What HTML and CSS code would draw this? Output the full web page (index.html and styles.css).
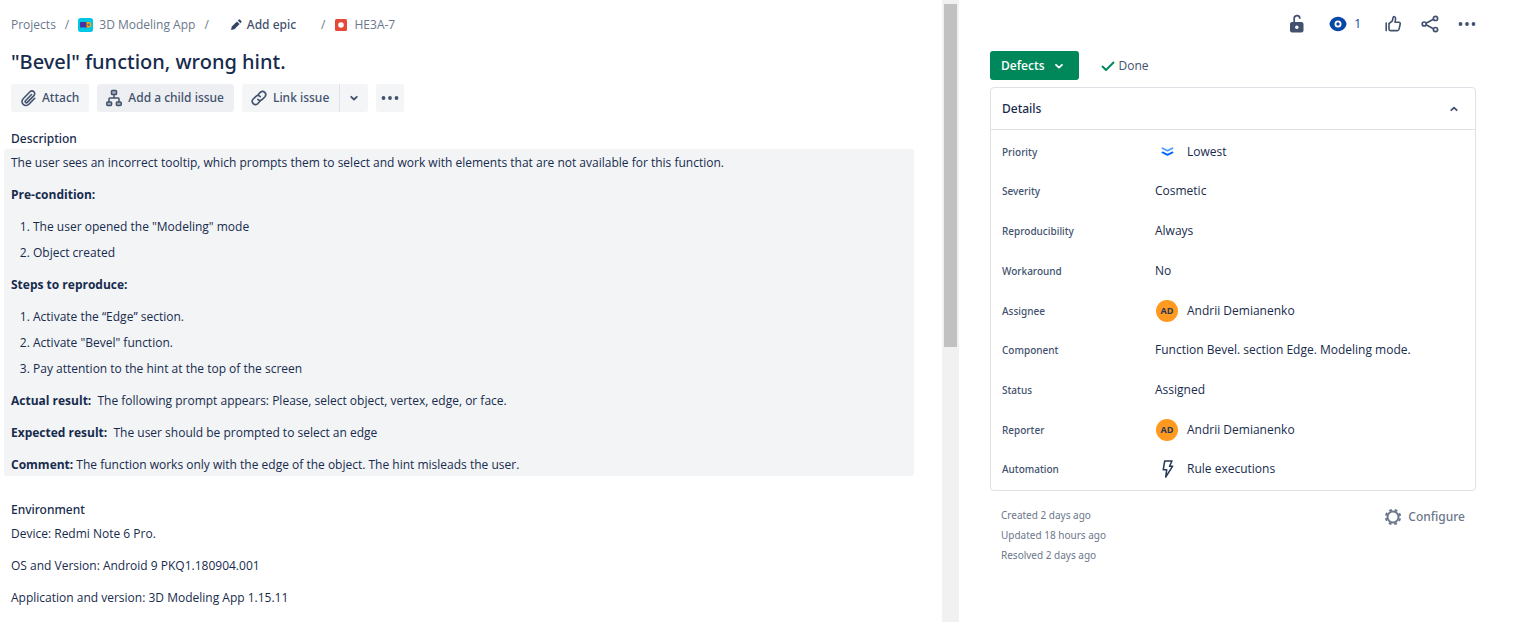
FILE: index.html
```html
<!DOCTYPE html>
<html lang="en">
<head>
<meta charset="utf-8">
<meta name="viewport" content="width=device-width, initial-scale=1">
<title>HE3A-7</title>
<link rel="stylesheet" href="styles.css">
</head>
<body>
<div class="layout">
  <main class="issue">
    <nav class="crumbs" aria-label="Breadcrumbs">
      <a href="#">Projects</a>
      <span class="sep">/</span>
      <a href="#" class="crumb-icon">
        <svg width="16" height="16" viewBox="0 0 16 16" aria-hidden="true"><rect y="1" width="15" height="14" rx="2.500" fill="#00c7e5"/><rect x="2" y="5" width="8" height="5.500" rx=".8" fill="#4a32a0"/><path d="M8.500 5h2a2.750 2.750 0 0 1 0 5.500h-2z" fill="#ffab00"/><circle cx="10.600" cy="7.700" r="1.200" fill="#5b6a91"/></svg>
        <span>3D Modeling App</span>
      </a>
      <span class="sep">/</span>
      <button type="button" class="epic">
        <svg width="12" height="12" viewBox="0 0 12 12" aria-hidden="true"><path d="M1 11l.8-3.400L7 2.400 9.600 5 4.400 10.200zM7.800 1.600l.9-.9a1 1 0 0 1 1.400 0l1.200 1.200a1 1 0 0 1 0 1.400l-.9.9z" fill="#344563"/></svg>
        <span>Add epic</span>
      </button>
      <span class="sep">/</span>
      <a href="#" class="crumb-icon key">
        <svg width="12" height="12" viewBox="0 0 12 12" aria-hidden="true"><rect width="12" height="12" rx="1.500" fill="#e5493a"/><circle cx="6" cy="6" r="2.800" fill="#fff"/></svg>
        <span>HE3A-7</span>
      </a>
    </nav>

    <h1 class="title">"Bevel" function, wrong hint.</h1>

    <div class="toolbar">
      <button type="button" class="btn">
        <svg width="18" height="18" viewBox="0 0 18 18" fill="none" stroke="#42526e" stroke-width="1.600" stroke-linecap="round" aria-hidden="true"><path d="M12.500 5.500l-6 6.200a1.200 1.200 0 0 0 1.800 1.700l6.600-6.800a2.700 2.700 0 0 0-.1-3.900 2.700 2.700 0 0 0-3.800.1L4.200 9.700a4 4 0 0 0 0 5.700 4 4 0 0 0 5.700-.1l5.800-6"/></svg>
        <span>Attach</span>
      </button>
      <button type="button" class="btn btn-hover">
        <svg width="18" height="18" viewBox="0 0 18 18" fill="none" stroke="#42526e" stroke-width="1.500" aria-hidden="true"><rect x="6.500" y="1.500" width="5" height="4" rx=".8" fill="#a5adba"/><path d="M9 5.500V9M4 13V9.800q0-.8.800-.8h8.400q.8 0 .8.800V13"/><rect x="1.800" y="13" width="4.800" height="3.400" rx=".8" fill="#a5adba"/><rect x="11.400" y="13" width="4.800" height="3.400" rx=".8" fill="#a5adba"/></svg>
        <span>Add a child issue</span>
      </button>
      <div class="split">
        <button type="button" class="btn split-main">
          <svg width="18" height="18" viewBox="0 0 18 18" fill="none" stroke="#42526e" stroke-width="1.600" stroke-linecap="round" aria-hidden="true"><path d="M8 5.700l2.500-2.500a3.200 3.200 0 0 1 4.500 4.500l-2.700 2.700a3.200 3.200 0 0 1-4.500 0"/><path d="M10 12.300l-2.500 2.500A3.200 3.200 0 0 1 3 10.300l2.700-2.700a3.200 3.200 0 0 1 4.500 0"/></svg>
          <span>Link issue</span>
        </button>
        <button type="button" class="btn icon-btn" aria-label="More link options">
          <svg width="12" height="12" viewBox="0 0 12 12" fill="none" stroke="#42526e" stroke-width="1.800" stroke-linecap="round" stroke-linejoin="round" aria-hidden="true"><path d="M3.200 4.800L6 7.500l2.800-2.700"/></svg>
        </button>
      </div>
      <button type="button" class="btn icon-btn" aria-label="More actions">
        <svg width="18" height="6" viewBox="0 0 18 6" fill="#42526e" aria-hidden="true"><circle cx="2.500" cy="3" r="1.900"/><circle cx="9" cy="3" r="1.900"/><circle cx="15.500" cy="3" r="1.900"/></svg>
      </button>
    </div>

    <section>
      <h2 class="heading">Description</h2>
      <div class="prose shaded">
        <p>The user sees an incorrect tooltip, which prompts them to select and work with elements that are not available for this function.</p>
        <p><strong>Pre-condition:</strong></p>
        <ol>
          <li>The user opened the "Modeling" mode</li>
          <li>Object created</li>
        </ol>
        <p><strong>Steps to reproduce:</strong></p>
        <ol>
          <li>Activate the “Edge” section.</li>
          <li>Activate "Bevel" function.</li>
          <li>Pay attention to the hint at the top of the screen</li>
        </ol>
        <p><strong>Actual result:</strong>&nbsp; The following prompt appears: Please, select object, vertex, edge, or face.</p>
        <p><strong>Expected result:</strong>&nbsp; The user should be prompted to select an edge</p>
        <p><strong>Comment:</strong> The function works only with the edge of the object. The hint misleads the user.</p>
      </div>
    </section>

    <section class="environment">
      <h2 class="heading">Environment</h2>
      <div class="prose">
        <p>Device: Redmi Note 6 Pro.</p>
        <p>OS and Version: Android 9 PKQ1.180904.001</p>
        <p>Application and version: 3D Modeling App 1.15.11</p>
      </div>
    </section>
  </main>

  <div class="scroll-track" aria-hidden="true"><div class="scroll-thumb"></div></div>

  <aside class="side">
    <div class="actions">
      <button type="button" class="plain" aria-label="Restrictions">
        <svg width="18" height="20" viewBox="0 0 18 20" aria-hidden="true"><rect x="2" y="8" width="13.500" height="10.500" rx="2" fill="#42526e"/><path d="M6.200 8V4.800a2.800 2.800 0 0 1 5.600-.6" fill="none" stroke="#42526e" stroke-width="1.700" stroke-linecap="round"/><circle cx="8.800" cy="13.200" r="1.700" fill="#fff"/></svg>
      </button>
      <button type="button" class="plain watch" aria-label="Watchers: 1">
        <svg width="18" height="16" viewBox="0 0 18 16" aria-hidden="true"><path d="M9 .8c4.800 0 8.500 4.400 8.500 7.200S13.800 15.200 9 15.200.5 10.800.5 8 4.200.8 9 .8z" fill="#0747a6"/><circle cx="9" cy="8" r="2.600" fill="none" stroke="#fff" stroke-width="1.800"/></svg>
        <span>1</span>
      </button>
      <button type="button" class="plain" aria-label="Vote">
        <svg width="18" height="18" viewBox="0 0 18 18" fill="none" stroke="#42526e" stroke-width="1.600" stroke-linejoin="round" stroke-linecap="round" aria-hidden="true"><path d="M2.200 8v7.600M5 8.500l3.200-2.300 1-4c.3-1 2.400-.8 2.400 1.200 0 1.600-.6 3-.6 3.900h4c1 0 1.400.8 1.200 1.700l-1.200 5.400c-.2.800-.8 1.200-1.600 1.200H6.200c-.8 0-1.200-.5-1.200-1.300z"/></svg>
      </button>
      <button type="button" class="plain" aria-label="Share">
        <svg width="18" height="18" viewBox="0 0 18 18" fill="none" stroke="#42526e" stroke-width="1.700" aria-hidden="true"><path d="M5 8.200l7.400-4M5 9.800l7.400 4"/><circle cx="3.200" cy="9" r="2"/><circle cx="14.500" cy="3.400" r="2.100"/><circle cx="14.500" cy="14.600" r="2.100"/></svg>
      </button>
      <button type="button" class="plain" aria-label="Actions">
        <svg width="18" height="6" viewBox="0 0 18 6" fill="#42526e" aria-hidden="true"><circle cx="2.500" cy="3" r="1.900"/><circle cx="9" cy="3" r="1.900"/><circle cx="15.500" cy="3" r="1.900"/></svg>
      </button>
    </div>

    <div class="status-row">
      <button type="button" class="status">
        <span>Defects</span>
        <svg width="12" height="12" viewBox="0 0 12 12" fill="none" stroke="#fff" stroke-width="1.800" stroke-linecap="round" stroke-linejoin="round" aria-hidden="true"><path d="M3 4.800l3 2.800 3-2.800"/></svg>
      </button>
      <span class="done">
        <svg width="14" height="12" viewBox="0 0 14 12" fill="none" stroke="#00875a" stroke-width="1.900" stroke-linecap="round" stroke-linejoin="round" aria-hidden="true"><path d="M1.500 6.500L5 10l7.500-7.500"/></svg>
        <span>Done</span>
      </span>
    </div>

    <section class="panel">
      <button type="button" class="panel-head" aria-expanded="true">
        <span>Details</span>
        <svg width="12" height="12" viewBox="0 0 12 12" fill="none" stroke="#42526e" stroke-width="1.800" stroke-linecap="round" stroke-linejoin="round" aria-hidden="true"><path d="M3.300 7.200L6 4.700l2.700 2.500"/></svg>
      </button>
      <dl class="fields">
        <div class="field with-icon"><dt>Priority</dt><dd>
          <svg class="field-icon" width="24" height="14" viewBox="0 0 24 14" fill="none" stroke-width="1.800" stroke-linecap="round" stroke-linejoin="round" aria-hidden="true"><path d="M7.500 3.200l5 2.500 5-2.500" stroke="#4c9aff"/><path d="M7.500 7.400l5 2.500 5-2.500" stroke="#0065ff"/></svg>
          <span>Lowest</span></dd></div>
        <div class="field"><dt>Severity</dt><dd>Cosmetic</dd></div>
        <div class="field"><dt>Reproducibility</dt><dd>Always</dd></div>
        <div class="field"><dt>Workaround</dt><dd>No</dd></div>
        <div class="field with-icon"><dt>Assignee</dt><dd><span class="avatar" aria-hidden="true">AD</span><span>Andrii Demianenko</span></dd></div>
        <div class="field"><dt>Component</dt><dd>Function Bevel. section Edge. Modeling mode.</dd></div>
        <div class="field"><dt>Status</dt><dd>Assigned</dd></div>
        <div class="field with-icon"><dt>Reporter</dt><dd><span class="avatar" aria-hidden="true">AD</span><span>Andrii Demianenko</span></dd></div>
        <div class="field with-icon"><dt>Automation</dt><dd>
          <svg class="field-icon" width="24" height="20" viewBox="0 0 24 20" fill="none" stroke="#253858" stroke-width="1.500" stroke-linejoin="round" aria-hidden="true"><path d="M9.700 2h7.300l-2.500 5.200h3.200L10.700 18l1-7.200H8.200z"/></svg>
          <span>Rule executions</span></dd></div>
      </dl>
    </section>

    <footer class="meta">
      <ul class="dates">
        <li>Created 2 days ago</li>
        <li>Updated 18 hours ago</li>
        <li>Resolved 2 days ago</li>
      </ul>
      <button type="button" class="plain configure">
        <svg width="18" height="18" viewBox="0 0 18 18" fill="none" stroke="#6b778c" aria-hidden="true"><circle cx="9" cy="9" r="5.500" stroke-width="2"/><circle cx="9" cy="9" r="7.200" stroke-width="2" stroke-dasharray="2.830 2.830" stroke-dashoffset="4.200"/></svg>
        <span>Configure</span>
      </button>
    </footer>
  </aside>
</div>
</body>
</html>
```
FILE: styles.css
```css
* {
  box-sizing: border-box;
}

body {
  margin: 0;
  background: #fff;
  color: #172b4d;
  font: 12px/20px "Open Sans", "Noto Sans", sans-serif;
}

button {
  margin: 0;
  padding: 0;
  border: 0;
  background: none;
  color: inherit;
  font: inherit;
}

a {
  color: inherit;
  text-decoration: none;
}

h1, h2, p, ol, ul, dl, dd {
  margin: 0;
  padding: 0;
}

svg {
  display: block;
  flex: none;
}

.layout {
  display: grid;
  grid-template-columns: minmax(0, 942fr) 17px minmax(0, 566fr);
  min-height: 100vh;
}

.issue {
  padding: 15px 28px 0 4px;
}

.crumbs {
  display: flex;
  align-items: center;
  gap: 9px;
  padding-left: 7px;
  color: #6b778c;
}

.crumb-icon {
  display: flex;
  align-items: center;
  gap: 5px;
}

.key {
  gap: 8px;
}

.epic {
  display: flex;
  align-items: center;
  gap: 5px;
  margin: 0 16px 0 12px;
  color: #42526e;
  font-family: "Noto Sans", sans-serif;
  font-weight: 500;
}

.title {
  padding: 13px 7px 9px;
  font-family: "Noto Sans", sans-serif;
  font-size: 20px;
  line-height: 27px;
  font-weight: 500;
}

.toolbar {
  display: flex;
  gap: 8px;
  padding-left: 7px;
}

.btn {
  display: flex;
  align-items: center;
  justify-content: center;
  gap: 5px;
  height: 28px;
  padding: 0 10px 0 8px;
  border-radius: 3px;
  background: #f4f5f7;
  color: #42526e;
  font-family: "Noto Sans", sans-serif;
  font-weight: 500;
}

.btn-hover {
  background: #eeeff2;
}

.split {
  display: flex;
}

.split-main {
  border-right: 1px solid #dfe1e6;
  border-radius: 3px 0 0 3px;
}

.icon-btn {
  width: 28px;
  padding: 0;
}

.heading {
  padding: 17px 7px 0;
  font-family: "Noto Sans", sans-serif;
  font-size: 12px;
  line-height: 20px;
  font-weight: 500;
}

.prose {
  display: grid;
  gap: 12px;
  padding: 4px 7px 1px;
}

.prose ol {
  display: grid;
  gap: 6px;
  padding-left: 22px;
}

.shaded {
  border-radius: 3px;
  background: #f2f4f6;
}

.environment {
  padding-top: 7px;
}

.scroll-track {
  padding: 4px 2px 0;
  background: #f1f1f1;
}

.scroll-thumb {
  height: 343px;
  background: #c1c1c1;
}

.side {
  padding: 12px 49px 0 31px;
}

.actions {
  display: flex;
  justify-content: flex-end;
  gap: 19px;
}

.plain {
  display: flex;
  align-items: center;
  height: 24px;
}

.watch {
  gap: 7px;
  padding: 0 4px;
  color: #0747a6;
  font-weight: 500;
}

.status-row {
  display: flex;
  align-items: center;
  gap: 22px;
  padding: 15px 0 7px;
}

.status {
  display: flex;
  align-items: center;
  gap: 8px;
  height: 29px;
  padding: 0 14px 0 11px;
  border-radius: 3px;
  background: #00875a;
  color: #fff;
  font-weight: 600;
}

.done {
  display: flex;
  align-items: center;
  gap: 4px;
  color: #42526e;
}

.panel {
  border: 1px solid #dfe1e6;
  border-radius: 4px;
}

.panel-head {
  display: flex;
  align-items: center;
  justify-content: space-between;
  width: 100%;
  height: 42px;
  padding: 0 15px 0 11px;
  border-bottom: 1px solid #dfe1e6;
  font-family: "Noto Sans", sans-serif;
  font-weight: 500;
}

.fields {
  padding: 2px 11px;
}

.field {
  display: grid;
  grid-template-columns: 153px minmax(0, 1fr);
  align-items: center;
  min-height: 40px;
}

.with-icon {
  min-height: 39px;
}

.field dt {
  color: #42526e;
  font-family: "Noto Sans", sans-serif;
  font-size: 10px;
  font-weight: 500;
}

.field dd {
  display: flex;
  align-items: center;
  gap: 8px;
}

.avatar {
  width: 22px;
  height: 22px;
  margin: 0 1px;
  border-radius: 50%;
  background: #ff991f;
  color: #253858;
  font-size: 9px;
  line-height: 22px;
  font-weight: 700;
  text-align: center;
}

.meta {
  display: flex;
  align-items: flex-start;
  justify-content: space-between;
  padding: 14px 11px 0;
}

.dates {
  color: #6b778c;
  font-family: "Noto Sans", sans-serif;
  font-size: 10px;
  list-style: none;
}

.configure {
  gap: 6px;
  color: #6b778c;
  font-family: "Noto Sans", sans-serif;
  font-weight: 500;
}
```
